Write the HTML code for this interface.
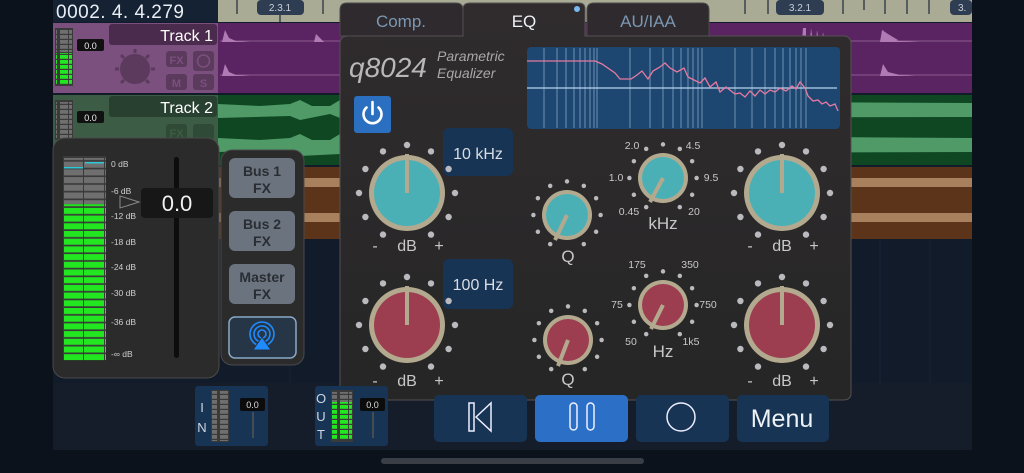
<!DOCTYPE html>
<html><head><meta charset="utf-8"><style>
html,body{margin:0;padding:0;background:#0b121c;width:1024px;height:473px;overflow:hidden}
svg{display:block}
text{font-family:"Liberation Sans","DejaVu Sans",sans-serif}
</style></head><body>
<svg width="1024" height="473" viewBox="0 0 1024 473" xmlns="http://www.w3.org/2000/svg">
<defs>
<g id="dots" fill="#b9b9be">
<circle cx="0" cy="-48" r="3.2"/><circle cx="24" cy="-41.6" r="3.2"/><circle cx="-24" cy="-41.6" r="3.2"/>
<circle cx="41.6" cy="-24" r="3.2"/><circle cx="-41.6" cy="-24" r="3.2"/><circle cx="48" cy="0" r="3.2"/><circle cx="-48" cy="0" r="3.2"/>
<circle cx="41.6" cy="24" r="3.2"/><circle cx="-41.6" cy="24" r="3.2"/><circle cx="24" cy="41.6" r="3.2"/><circle cx="-24" cy="41.6" r="3.2"/>
</g>
<pattern id="gm" x="0" y="0" width="42" height="7.7" patternUnits="userSpaceOnUse">
<rect x="0" y="0" width="20" height="6" fill="#22e61f"/><rect x="21" y="0" width="20" height="6" fill="#22e61f"/></pattern>
<pattern id="ym" x="0" y="0" width="42" height="7.7" patternUnits="userSpaceOnUse">
<rect x="0" y="0" width="20" height="6" fill="#6f6f6f"/><rect x="21" y="0" width="20" height="6" fill="#6f6f6f"/></pattern>
<pattern id="gs" x="0" y="0" width="20" height="5" patternUnits="userSpaceOnUse">
<rect x="0" y="0" width="8" height="3.8" fill="#22e61f"/><rect x="9" y="0" width="8" height="3.8" fill="#22e61f"/></pattern>
<pattern id="ys" x="0" y="0" width="20" height="5" patternUnits="userSpaceOnUse">
<rect x="0" y="0" width="8" height="3.8" fill="#6f6f6f"/><rect x="9" y="0" width="8" height="3.8" fill="#6f6f6f"/></pattern>
<linearGradient id="pan" x1="0" y1="0" x2="0" y2="1"><stop offset="0" stop-color="#302c2e"/><stop offset="1" stop-color="#262626"/></linearGradient>
</defs>

<rect x="53" y="0" width="919" height="450" fill="#111b29"/>
<g stroke="#18263a" stroke-width="1">
<line x1="290" y1="240" x2="290" y2="383"/><line x1="420" y1="240" x2="420" y2="383"/><line x1="880" y1="240" x2="880" y2="383"/><line x1="930" y1="240" x2="930" y2="383"/></g>
<rect x="53" y="383" width="919" height="67" fill="#151d2a"/>

<rect x="218" y="0" width="754" height="22" fill="#a9ab94"/>
<g stroke="#2b3340" stroke-width="1.3">
<line x1="237" y1="0" x2="237" y2="14"/><line x1="280" y1="14" x2="280" y2="22"/><line x1="323" y1="0" x2="323" y2="14"/>
<line x1="843" y1="0" x2="843" y2="14"/><line x1="864" y1="0" x2="864" y2="10"/><line x1="885" y1="0" x2="885" y2="14"/><line x1="907" y1="0" x2="907" y2="14"/><line x1="929" y1="0" x2="929" y2="14"/>
<line x1="768" y1="0" x2="768" y2="14"/><line x1="745" y1="0" x2="745" y2="14"/></g>
<rect x="257" y="0" width="47" height="15" rx="4" fill="#2f3d52"/>
<text x="280" y="11" font-size="10" fill="#c8d0da" text-anchor="middle">2.3.1</text>
<rect x="776" y="0" width="48" height="15" rx="4" fill="#2f3d52"/>
<text x="800" y="11" font-size="10" fill="#c8d0da" text-anchor="middle">3.2.1</text>
<rect x="950" y="0" width="22" height="15" rx="4" fill="#2f3d52"/>
<text x="958" y="11" font-size="10" fill="#c8d0da">3.</text>

<rect x="53" y="0" width="165" height="22" fill="#152234"/>
<text x="56" y="18" font-size="19" fill="#e8eef4" letter-spacing="0.5">0002. 4. 4.279</text>

<!-- track 1 -->
<rect x="53" y="23" width="165" height="70" fill="#7b4f7e"/>
<rect x="218" y="23" width="754" height="70" fill="#5a2462"/>
<rect x="109" y="24" width="108" height="21" rx="3" fill="#4b2b4d"/>
<text x="213" y="41" font-size="16" fill="#fff" text-anchor="end">Track 1</text>
<rect x="55" y="28" width="18" height="58" fill="#3a3a3a"/>
<rect x="56" y="53" width="16" height="32" fill="url(#gs)"/>
<rect x="56" y="30" width="16" height="22" fill="url(#ys)"/>
<rect x="77" y="39" width="27" height="12" rx="2" fill="#111"/><text x="90.5" y="49" font-size="9" fill="#eee" text-anchor="middle">0.0</text>
<circle cx="135" cy="69" r="15" fill="#5b3a5d"/>
<g stroke="#5b3a5d" stroke-width="3"><line x1="135" y1="49" x2="135" y2="53"/><line x1="115" y1="69" x2="119" y2="69"/><line x1="151" y1="69" x2="155" y2="69"/><line x1="121" y1="55" x2="124" y2="58"/><line x1="149" y1="55" x2="146" y2="58"/><line x1="121" y1="83" x2="124" y2="80"/><line x1="149" y1="83" x2="146" y2="80"/></g>
<rect x="166" y="51" width="21" height="16" rx="3" fill="#5b3a5d"/><text x="176.5" y="64" font-size="11" font-weight="bold" fill="#7b4f7e" text-anchor="middle">FX</text>
<rect x="193" y="51" width="21" height="20" rx="3" fill="#5b3a5d"/><circle cx="203.5" cy="61" r="6" fill="none" stroke="#7b4f7e" stroke-width="1.5"/>
<rect x="166" y="74" width="21" height="16" rx="3" fill="#5b3a5d"/><text x="176.5" y="87" font-size="11" font-weight="bold" fill="#7b4f7e" text-anchor="middle">M</text>
<rect x="193" y="74" width="21" height="16" rx="3" fill="#5b3a5d"/><text x="203.5" y="87" font-size="11" font-weight="bold" fill="#7b4f7e" text-anchor="middle">S</text>
<line x1="220" y1="41" x2="972" y2="41" stroke="#8a5a8e" stroke-width="1"/><line x1="220" y1="75" x2="972" y2="75" stroke="#8a5a8e" stroke-width="1"/>
<g fill="#b07ab4">
<path d="M222 42 L225 30 L229 38 L236 41 L250 42Z"/><path d="M222 76 L225 64 L229 72 L236 75 L250 76Z"/>
<path d="M314 42 L316 34 L320 38 L324 42Z"/>
<path d="M880 42 L883 30 L888 38 L900 41 L920 42Z"/><path d="M880 76 L883 64 L888 72 L900 75 L915 76Z"/>
<path d="M802 42 L803 28 L806 28 L806 42Z"/><path d="M810 42 L811 28 L813 42Z"/><path d="M816 42 L817 30 L819 42Z"/><path d="M822 42 L823 32 L825 42Z"/>
<path d="M882 30 L888 34 L898 40 L880 42Z"/>
</g>

<!-- track 2 -->
<rect x="53" y="95" width="165" height="70" fill="#3d5c46"/>
<rect x="218" y="95" width="754" height="70" fill="#0e4722"/>
<rect x="109" y="96" width="108" height="21" rx="3" fill="#28402f"/>
<text x="213" y="113" font-size="16" fill="#fff" text-anchor="end">Track 2</text>
<rect x="55" y="100" width="18" height="40" fill="#3a3a3a"/>
<rect x="56" y="102" width="16" height="36" fill="url(#ys)"/>
<rect x="77" y="111" width="27" height="12" rx="2" fill="#111"/><text x="90.5" y="121" font-size="9" fill="#eee" text-anchor="middle">0.0</text>
<rect x="166" y="124" width="21" height="16" rx="3" fill="#2f4a37"/><text x="176.5" y="137" font-size="11" font-weight="bold" fill="#3d5c46" text-anchor="middle">FX</text>
<rect x="193" y="124" width="21" height="16" rx="3" fill="#2f4a37"/>
<g fill="#4f9a66">
<path d="M218 104 L260 106 L290 104 L300 100 L312 106 L330 106 L340 100 L972 103 L972 117 L340 118 L330 114 L300 120 L290 116 L218 118Z"/>
<path d="M218 138 L260 140 L290 138 L300 134 L312 140 L330 140 L340 134 L972 138 L972 152 L340 154 L300 156 L290 150 L218 152Z"/>
</g>

<!-- track 3 -->
<rect x="218" y="167" width="754" height="72" fill="#5b3419"/>
<g fill="#a8805e"><rect x="218" y="178" width="754" height="9"/><rect x="218" y="213" width="754" height="9"/></g>

<!-- mixer panel -->
<rect x="53" y="138" width="166" height="240" rx="12" fill="#2b2b2b" stroke="#4a4a4a"/>
<rect x="63" y="156" width="43" height="204" fill="#3a3a3a"/>
<rect x="64" y="158" width="42" height="46" fill="url(#ym)"/>
<rect x="64" y="204.2" width="42" height="156" fill="url(#gm)"/>
<rect x="85" y="162" width="19" height="1.5" fill="#2ec8d8"/><rect x="64" y="167" width="19" height="1.5" fill="#2ec8d8"/>
<g font-size="8.5" fill="#cfcfcf"><text x="111" y="167">0 dB</text><text x="111" y="194">-6 dB</text><text x="111" y="219">-12 dB</text><text x="111" y="245">-18 dB</text><text x="111" y="270">-24 dB</text><text x="111" y="296">-30 dB</text><text x="111" y="325">-36 dB</text><text x="111" y="357">-∞ dB</text></g>
<path d="M120 196 L139 202 L120 208Z" fill="none" stroke="#888" stroke-width="1"/>
<rect x="174" y="157" width="5" height="201" rx="2.5" fill="#0d0d0d"/>
<rect x="141" y="188" width="72" height="30" rx="4" fill="#171717"/>
<text x="177" y="211" font-size="22" fill="#f2f2f2" text-anchor="middle">0.0</text>

<!-- bus panel -->
<rect x="221" y="150" width="83" height="215" rx="11" fill="#2b2b2b" stroke="#4a4a4a"/>
<g fill="#6a737e"><rect x="229" y="158" width="66" height="40" rx="6"/><rect x="229" y="211" width="66" height="40" rx="6"/><rect x="229" y="264" width="66" height="40" rx="6"/></g>
<g font-size="14" font-weight="bold" fill="#2a2e33" text-anchor="middle"><text x="262" y="176">Bus 1</text><text x="262" y="193">FX</text><text x="262" y="229">Bus 2</text><text x="262" y="246">FX</text><text x="262" y="282">Master</text><text x="262" y="299">FX</text></g>
<rect x="229" y="317" width="67" height="41" rx="6" fill="#273646" stroke="#8aa9c7" stroke-width="1.5"/>
<g fill="none" stroke="#1e8bff" stroke-width="1.6"><circle cx="262" cy="334" r="4"/><circle cx="262" cy="334" r="8"/><circle cx="262" cy="334" r="12"/></g>
<path d="M253 350 L262 337 L271 350Z" fill="#1e8bff" stroke="#273646" stroke-width="1"/>

<!-- EQ tabs -->
<path d="M340 36 L340 10 Q340 3 347 3 L456 3 Q463 3 463 10 L463 36Z" fill="#2e2a2d" stroke="#4d4a4c"/>
<path d="M587 36 L587 10 Q587 3 594 3 L702 3 Q709 3 709 10 L709 36Z" fill="#2e2a2d" stroke="#4d4a4c"/>
<text x="401" y="27" font-size="17" fill="#7b97b3" text-anchor="middle">Comp.</text>
<text x="648" y="27" font-size="17" fill="#7b97b3" text-anchor="middle">AU/IAA</text>
<path d="M348 36 L463 36 L463 9 Q463 3 470 3 L579 3 Q585 3 585 9 L585 36 L843 36 Q851 36 851 44 L851 393 Q851 400 843 400 L348 400 Q340 400 340 393 L340 44 Q340 36 348 36Z" fill="url(#pan)" stroke="#555052"/>
<text x="524" y="27" font-size="17" fill="#eef2f6" text-anchor="middle">EQ</text>
<circle cx="577" cy="9" r="3" fill="#7ab8ef"/>
<text x="349" y="77" font-size="28" font-style="italic" fill="#b8b8b8">q8024</text>
<text x="437" y="61" font-size="14" font-style="italic" fill="#a8a8a8">Parametric</text>
<text x="437" y="78" font-size="14" font-style="italic" fill="#a8a8a8">Equalizer</text>
<rect x="354" y="96" width="37" height="37" rx="3" fill="#2a6fc0"/>
<path d="M366.5 107.5 A9 9 0 1 0 378.5 107.5" fill="none" stroke="#fff" stroke-width="2.6" stroke-linecap="round"/>
<line x1="372.5" y1="102" x2="372.5" y2="114" stroke="#fff" stroke-width="2.6" stroke-linecap="round"/>

<rect x="527" y="47" width="313" height="82" rx="4" fill="#1d4670"/>
<g stroke="#5d80a4" stroke-width="1.3">
<line x1="544" y1="48" x2="544" y2="128"/><line x1="557" y1="48" x2="557" y2="128"/><line x1="566" y1="48" x2="566" y2="128"/><line x1="574" y1="48" x2="574" y2="128"/><line x1="580" y1="48" x2="580" y2="128"/><line x1="585" y1="48" x2="585" y2="128"/><line x1="590" y1="48" x2="590" y2="128"/><line x1="594" y1="48" x2="594" y2="128"/><line x1="597" y1="48" x2="597" y2="128"/>
<line x1="630" y1="48" x2="630" y2="128"/><line x1="650" y1="48" x2="650" y2="128"/><line x1="663" y1="48" x2="663" y2="128"/><line x1="673" y1="48" x2="673" y2="128"/><line x1="681" y1="48" x2="681" y2="128"/><line x1="688" y1="48" x2="688" y2="128"/><line x1="693" y1="48" x2="693" y2="128"/><line x1="698" y1="48" x2="698" y2="128"/><line x1="702" y1="48" x2="702" y2="128"/>
<line x1="735" y1="48" x2="735" y2="128"/><line x1="752" y1="48" x2="752" y2="128"/><line x1="765" y1="48" x2="765" y2="128"/><line x1="775" y1="48" x2="775" y2="128"/><line x1="783" y1="48" x2="783" y2="128"/><line x1="790" y1="48" x2="790" y2="128"/><line x1="796" y1="48" x2="796" y2="128"/><line x1="801" y1="48" x2="801" y2="128"/><line x1="806" y1="48" x2="806" y2="128"/></g>
<line x1="527" y1="88" x2="837" y2="88" stroke="#b8d4f0" stroke-width="1.3"/>
<polyline fill="none" stroke="#e77aa0" stroke-width="1.3" points="527,61 595,61 602,64 615,73 620,79 631,79 637,75 642,71 648,79 653,71 660,67 665,63 670,68 677,72 684,68 688,77 694,80 700,83 705,78 710,87 716,82 720,92 726,87 735,94 740,93 745,97 750,91 755,96 760,90 765,94 770,90 775,92 780,88 786,91 792,86 796,89 800,82 805,88 808,96 813,101 818,100 822,104 826,102 830,106 835,104 838,111"/>

<rect x="443" y="128" width="70" height="48" rx="6" fill="#173455"/>
<text x="478" y="159" font-size="16" fill="#d8dde4" text-anchor="middle">10 kHz</text>
<rect x="443" y="259" width="70" height="50" rx="6" fill="#173455"/>
<text x="478" y="290" font-size="16" fill="#d8dde4" text-anchor="middle">100 Hz</text>

<use href="#dots" x="407" y="193"/>
<circle cx="407" cy="193" r="38" fill="#b3a98f"/><circle cx="407" cy="193" r="33" fill="#4bb0b6"/>
<line x1="407" y1="193" x2="407" y2="154" stroke="#b3a98f" stroke-width="4"/>
<use href="#dots" x="782" y="193"/>
<circle cx="782" cy="193" r="38" fill="#b3a98f"/><circle cx="782" cy="193" r="33" fill="#4bb0b6"/>
<line x1="782" y1="193" x2="782" y2="154" stroke="#b3a98f" stroke-width="4"/>
<use href="#dots" x="407" y="325"/>
<circle cx="407" cy="325" r="38" fill="#b3a98f"/><circle cx="407" cy="325" r="33" fill="#9c3e50"/>
<line x1="407" y1="325" x2="407" y2="286" stroke="#b3a98f" stroke-width="4"/>
<use href="#dots" x="782" y="325"/>
<circle cx="782" cy="325" r="38" fill="#b3a98f"/><circle cx="782" cy="325" r="33" fill="#9c3e50"/>
<line x1="782" y1="325" x2="782" y2="286" stroke="#b3a98f" stroke-width="4"/>

<use href="#dots" transform="translate(567,215) scale(0.7)"/>
<circle cx="567" cy="215" r="25" fill="#b3a98f"/><circle cx="567" cy="215" r="21" fill="#4bb0b6"/>
<line x1="567" y1="215" x2="555" y2="240" stroke="#b3a98f" stroke-width="4"/>
<use href="#dots" transform="translate(663,178) scale(0.7)"/>
<circle cx="663" cy="178" r="25" fill="#b3a98f"/><circle cx="663" cy="178" r="21" fill="#4bb0b6"/>
<line x1="663" y1="178" x2="650" y2="202" stroke="#b3a98f" stroke-width="4"/>
<use href="#dots" transform="translate(568,340) scale(0.7)"/>
<circle cx="568" cy="340" r="25" fill="#b3a98f"/><circle cx="568" cy="340" r="21" fill="#9c3e50"/>
<line x1="568" y1="340" x2="558" y2="366" stroke="#b3a98f" stroke-width="4"/>
<use href="#dots" transform="translate(663,305) scale(0.7)"/>
<circle cx="663" cy="305" r="25" fill="#b3a98f"/><circle cx="663" cy="305" r="21" fill="#9c3e50"/>
<line x1="663" y1="305" x2="651" y2="329" stroke="#b3a98f" stroke-width="4"/>

<g fill="#c8c8c8" text-anchor="middle" font-size="16">
<text x="375" y="251">-</text><text x="407" y="251">dB</text><text x="439" y="251">+</text>
<text x="750" y="251">-</text><text x="782" y="251">dB</text><text x="814" y="251">+</text>
<text x="375" y="386">-</text><text x="407" y="386">dB</text><text x="439" y="386">+</text>
<text x="750" y="386">-</text><text x="782" y="386">dB</text><text x="814" y="386">+</text>
</g>
<g fill="#c8c8c8" text-anchor="middle">
<text x="568" y="262" font-size="17">Q</text><text x="568" y="385" font-size="17">Q</text>
<text x="663" y="229" font-size="17">kHz</text><text x="663" y="357" font-size="17">Hz</text>
<g font-size="10.5"><text x="632" y="149">2.0</text><text x="693" y="149">4.5</text><text x="616" y="181">1.0</text><text x="711" y="181">9.5</text><text x="629" y="215">0.45</text><text x="694" y="215">20</text>
<text x="637" y="268">175</text><text x="690" y="268">350</text><text x="617" y="308">75</text><text x="708" y="308">750</text><text x="631" y="345">50</text><text x="691" y="345">1k5</text></g>
</g>

<rect x="195" y="386" width="73" height="60" rx="3" fill="#173455"/>
<rect x="211" y="390" width="18" height="52" fill="#3a3a3a"/>
<rect x="212" y="391" width="16" height="50" fill="url(#ys)"/>
<rect x="240" y="398" width="25" height="13" rx="2" fill="#0c0c0c"/><text x="252.5" y="408" font-size="9" fill="#ddd" text-anchor="middle">0.0</text>
<line x1="253" y1="412" x2="253" y2="438" stroke="#555" stroke-width="1.5"/>
<text x="202" y="412" font-size="13" fill="#cfd6de" text-anchor="middle">I</text><text x="202" y="432" font-size="13" fill="#cfd6de" text-anchor="middle">N</text>
<rect x="315" y="386" width="73" height="60" rx="3" fill="#173455"/>
<rect x="331" y="390" width="22" height="52" fill="#3a3a3a"/>
<rect x="332" y="392" width="20" height="10" fill="url(#ys)"/>
<rect x="332" y="402" width="20" height="38" fill="url(#gs)"/>
<rect x="360" y="398" width="25" height="13" rx="2" fill="#0c0c0c"/><text x="372.5" y="408" font-size="9" fill="#ddd" text-anchor="middle">0.0</text>
<line x1="373" y1="412" x2="373" y2="438" stroke="#555" stroke-width="1.5"/>
<g font-size="13" fill="#cfd6de" text-anchor="middle"><text x="321" y="403">O</text><text x="321" y="421">U</text><text x="321" y="439">T</text></g>

<rect x="434" y="395" width="93" height="47" rx="5" fill="#173455"/>
<rect x="535" y="395" width="93" height="47" rx="5" fill="#2b70c6"/>
<rect x="636" y="395" width="93" height="47" rx="5" fill="#173455"/>
<rect x="737" y="395" width="92" height="47" rx="5" fill="#173455"/>
<g fill="none" stroke="#eef" stroke-width="1.5">
<rect x="469" y="403" width="5" height="28"/><path d="M476 417 L491 403 L491 431Z"/>
<rect x="570" y="403" width="7" height="27" rx="3.5"/><rect x="587" y="403" width="7" height="27" rx="3.5"/>
<circle cx="681" cy="417" r="14"/></g>
<text x="782" y="427" font-size="25" fill="#eef2f6" text-anchor="middle">Menu</text>

<rect x="381" y="458" width="263" height="6" rx="3" fill="#3a3f47"/>
</svg>
</body></html>
